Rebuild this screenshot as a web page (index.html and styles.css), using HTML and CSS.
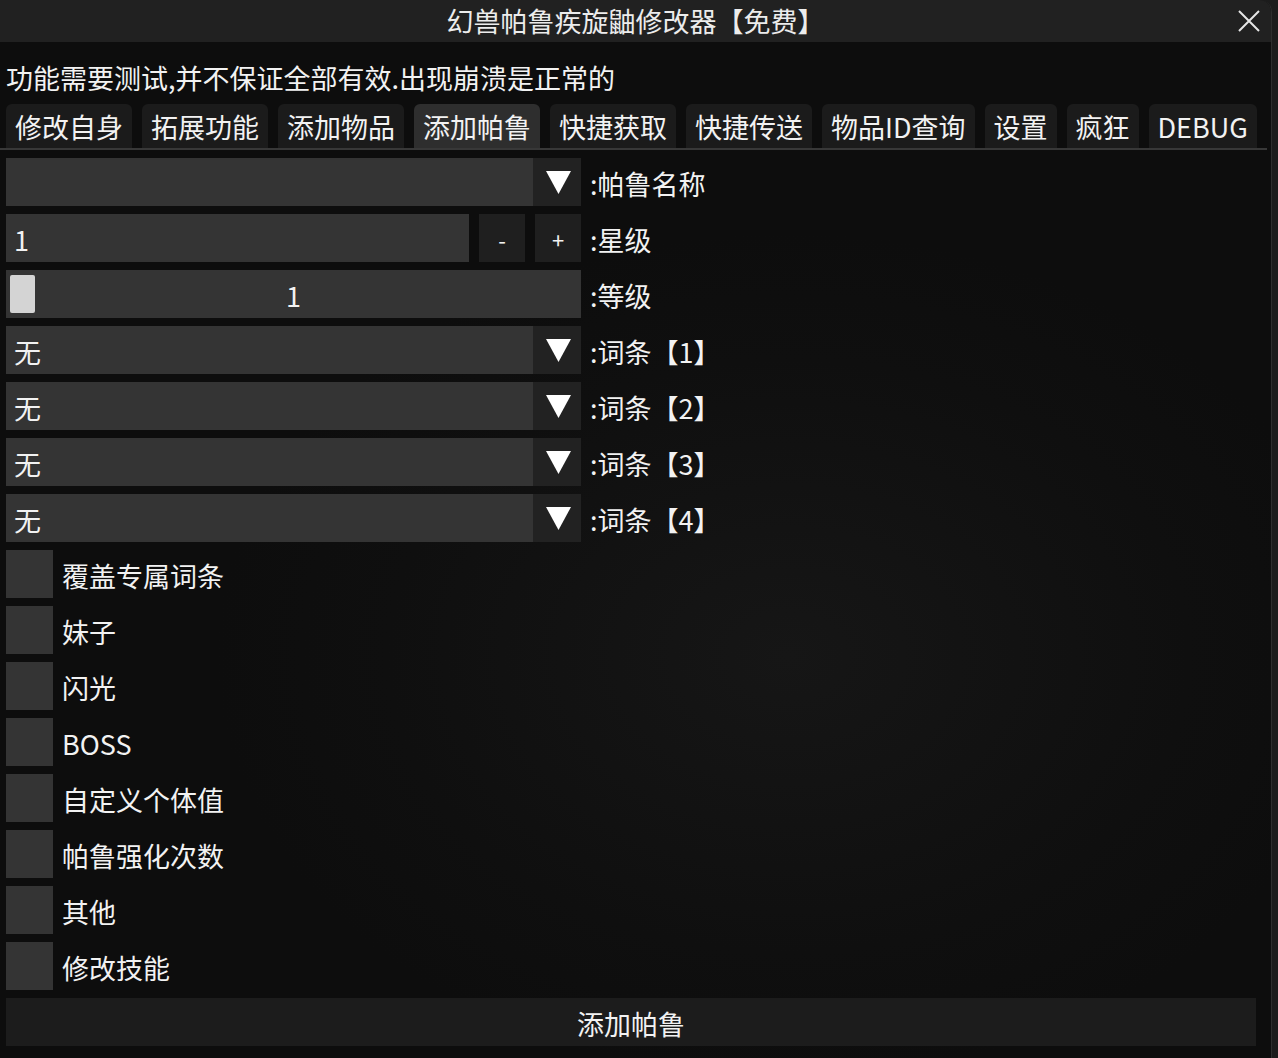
FILE: index.html
```html
<!DOCTYPE html>
<html lang="zh-CN">
<head>
<meta charset="utf-8">
<title>幻兽帕鲁疾旋鼬修改器【免费】</title>
<link rel="stylesheet" href="styles.css">
</head>
<body>
<div class="window">
  <header class="titlebar">
    <span></span>
    <span class="title">幻兽帕鲁疾旋鼬修改器【免费】</span>
    <button class="close" aria-label="关闭">
      <svg width="22" height="22" viewBox="0 0 22 22"><path d="M1 1 L21 21 M21 1 L1 21" stroke="#e6e6e6" stroke-width="2" fill="none"/></svg>
    </button>
  </header>

  <main class="content">
    <p class="notice">功能需要测试,并不保证全部有效.出现崩溃是正常的</p>

    <nav class="tabs">
      <span class="tab">修改自身</span>
      <span class="tab">拓展功能</span>
      <span class="tab">添加物品</span>
      <span class="tab active">添加帕鲁</span>
      <span class="tab">快捷获取</span>
      <span class="tab">快捷传送</span>
      <span class="tab">物品ID查询</span>
      <span class="tab">设置</span>
      <span class="tab">疯狂</span>
      <span class="tab">DEBUG</span>
    </nav>

    <div class="form">
      <div class="row">
        <div class="combo"><span class="combo-value"></span><span class="combo-arrow"><svg width="25" height="23" viewBox="0 0 25 23"><polygon points="0,0 25,0 12.5,23" fill="#fff"/></svg></span></div>
        <span class="label">:帕鲁名称</span>
      </div>
      <div class="row">
        <div class="number-input">1</div>
        <span class="step">-</span>
        <span class="step">+</span>
        <span class="label">:星级</span>
      </div>
      <div class="row">
        <div class="slider"><span class="thumb"></span><span class="slider-value">1</span></div>
        <span class="label">:等级</span>
      </div>
      <div class="row">
        <div class="combo"><span class="combo-value">无</span><span class="combo-arrow"><svg width="25" height="23" viewBox="0 0 25 23"><polygon points="0,0 25,0 12.5,23" fill="#fff"/></svg></span></div>
        <span class="label">:词条【1】</span>
      </div>
      <div class="row">
        <div class="combo"><span class="combo-value">无</span><span class="combo-arrow"><svg width="25" height="23" viewBox="0 0 25 23"><polygon points="0,0 25,0 12.5,23" fill="#fff"/></svg></span></div>
        <span class="label">:词条【2】</span>
      </div>
      <div class="row">
        <div class="combo"><span class="combo-value">无</span><span class="combo-arrow"><svg width="25" height="23" viewBox="0 0 25 23"><polygon points="0,0 25,0 12.5,23" fill="#fff"/></svg></span></div>
        <span class="label">:词条【3】</span>
      </div>
      <div class="row">
        <div class="combo"><span class="combo-value">无</span><span class="combo-arrow"><svg width="25" height="23" viewBox="0 0 25 23"><polygon points="0,0 25,0 12.5,23" fill="#fff"/></svg></span></div>
        <span class="label">:词条【4】</span>
      </div>

      <label class="row"><span class="check"></span><span class="label">覆盖专属词条</span></label>
      <label class="row"><span class="check"></span><span class="label">妹子</span></label>
      <label class="row"><span class="check"></span><span class="label">闪光</span></label>
      <label class="row"><span class="check"></span><span class="label">BOSS</span></label>
      <label class="row"><span class="check"></span><span class="label">自定义个体值</span></label>
      <label class="row"><span class="check"></span><span class="label">帕鲁强化次数</span></label>
      <label class="row"><span class="check"></span><span class="label">其他</span></label>
      <label class="row"><span class="check"></span><span class="label">修改技能</span></label>
    </div>

    <button class="submit">添加帕鲁</button>
  </main>
</div>
</body>
</html>
```

FILE: styles.css
```css
* {
  box-sizing: border-box;
}

html, body {
  margin: 0;
  height: 100%;
  background: #1c1c1c;
}

body {
  font-family: "Noto Sans CJK SC", "Noto Sans", sans-serif;
  color: #f2f2f2;
  font-size: 27px;
  overflow: hidden;
}

.window {
  width: 1272px;
  height: 1058px;
  background: radial-gradient(ellipse 45% 40% at 62% 62%, #161616 0%, #0f0f0f 70%, #0d0d0d 100%);
  border-right: 1px solid #2e2e2e;
  border-top-right-radius: 12px;
  overflow: hidden;
}

/* window title bar */
.titlebar {
  height: 42px;
  background: #212121;
  display: grid;
  grid-template-columns: 1fr auto 1fr;
  align-items: center;
}

.title {
  font-size: 27px;
  line-height: 42px;
  color: #ececec;
  white-space: nowrap;
}

.close {
  justify-self: end;
  margin-right: 11px;
  width: 22px;
  height: 22px;
  padding: 0;
  border: 0;
  background: none;
  display: flex;
}

/* main panel */
.content {
  display: flex;
  flex-direction: column;
}

.notice {
  margin: 0;
  padding: 16px 6px 6px;
  line-height: 40px;
  white-space: nowrap;
}

.tabs {
  display: flex;
  gap: 10px;
  padding: 0 6px;
  margin-right: 4px;
  border-bottom: 2px solid #383838;
}

.tab {
  padding: 1px 9px 0;
  line-height: 43px;
  height: 44px;
  background: #1b1b1b;
  border-radius: 6px 6px 0 0;
  white-space: nowrap;
}

.tab.active {
  background: #2e2e2e;
}

.form {
  display: flex;
  flex-direction: column;
  gap: 8px;
  padding: 0 6px;
  margin-top: 8px;
}

.row {
  display: flex;
  align-items: center;
  height: 48px;
}

.label {
  margin-left: 9px;
  padding-top: 3px;
  white-space: nowrap;
  line-height: 45px;
}

/* drop-down */
.combo {
  width: 575px;
  height: 48px;
  display: flex;
}

.combo-value {
  flex: 1;
  background: #343434;
  padding: 3px 0 0 8px;
  line-height: 45px;
}

.combo-arrow {
  width: 48px;
  background: #222222;
  display: flex;
  align-items: center;
  justify-content: center;
  padding-left: 2px;
}

/* number stepper */
.number-input {
  width: 463px;
  height: 48px;
  background: #343434;
  padding: 3px 0 0 8px;
  line-height: 45px;
}

.step {
  width: 46px;
  height: 48px;
  margin-left: 10px;
  background: #1f1f1f;
  display: flex;
  align-items: center;
  justify-content: center;
  font-size: 22px;
  padding-top: 2px;
}

/* level slider */
.slider {
  position: relative;
  width: 575px;
  height: 48px;
  background: #343434;
  text-align: center;
  padding-top: 3px;
  line-height: 45px;
}

.thumb {
  position: absolute;
  left: 4px;
  top: 5px;
  width: 25px;
  height: 38px;
  background: #d4d4d4;
  border-radius: 2px;
}

/* check boxes */
.check {
  width: 47px;
  height: 48px;
  background: #343434;
  flex: none;
}

.submit {
  margin: 8px 0 0 6px;
  width: 1250px;
  height: 48px;
  background: #1c1c1c;
  border: 0;
  color: #f2f2f2;
  font-family: inherit;
  font-size: 27px;
  padding: 3px 0 0;
}
```
